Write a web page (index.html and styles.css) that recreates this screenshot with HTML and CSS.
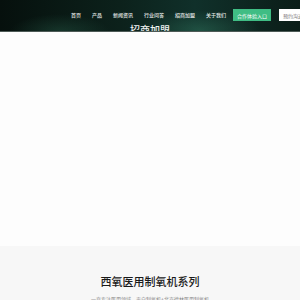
FILE: index.html
```html
<!DOCTYPE html>
<html>

<head>
  <title>西氧医用制氧机</title>
  <link rel="stylesheet" href="styles.css">
</head>

<body>
  <div class="header">
    <div class="nav-row">
      <ul class="nav">
        <li>首页</li>
        <li>产品</li>
        <li>新闻资讯</li>
        <li>行业问答</li>
        <li>招商加盟</li>
        <li>关于我们</li>
      </ul>
      <button class="btn-green">合作体验入口</button>
      <button class="btn-white">预约沟通</button>
    </div>
    <h1 class="banner-title">招商加盟</h1>
  </div>

  <div class="banner"></div>

  <div class="series">
    <h2>西氧医用制氧机系列</h2>
    <p>一直专注医用领域，来自制氧机+北京德林医用制氧机</p>
  </div>
</body>

</html>
```

FILE: styles.css
```css
* {
  margin: 0;
  padding: 0;
  box-sizing: border-box;
  font-family: "Noto Sans CJK SC", "Noto Sans", sans-serif;
}

html,
body {
  width: 300px;
  height: 300px;
  overflow: hidden;
  background-color: #fdfdfd;
}

.header {
  height: 32px;
  overflow: hidden;
  display: flex;
  flex-direction: column;
  align-items: center;
  border-bottom: 1px solid #4d5a56;
  background-color: #0a1613;
  background-image:
    radial-gradient(ellipse 60px 20px at 200px 30px, rgba(60, 140, 110, 0.35), transparent),
    radial-gradient(ellipse 50px 18px at 60px 32px, rgba(60, 140, 110, 0.25), transparent),
    linear-gradient(90deg, #06100d 0%, #0c211b 40%, #10302a 65%, #0b1d18 100%);
}

.nav-row {
  width: 100%;
  display: flex;
  align-items: center;
  padding: 9px 0 0 71px;
  height: 21px;
  flex-shrink: 0;
  white-space: nowrap;
}

.nav {
  list-style: none;
  display: flex;
  gap: 11px;
  flex-shrink: 0;
}

.nav li {
  font-size: 5px;
  font-weight: 500;
  line-height: 12px;
  color: #e4e8e6;
  flex-shrink: 0;
}

.btn-green,
.btn-white {
  border: none;
  font-size: 5px;
  height: 12px;
  padding: 0 4px;
  flex-shrink: 0;
  white-space: nowrap;
}

.btn-green {
  margin-left: 7px;
  width: 38px;
  background-color: #3fbd84;
  color: #ffffff;
}

.btn-white {
  margin-left: 8px;
  width: 30px;
  background-color: #ffffff;
  color: #777777;
  text-align: left;
}

.banner-title {
  font-size: 10px;
  font-weight: 500;
  line-height: 12px;
  margin-top: 3px;
  color: #eef2f0;
  flex-shrink: 0;
}

.banner {
  height: 214px;
  background-color: #fdfdfd;
}

.series {
  background-color: #f7f7f7;
  text-align: center;
  padding-top: 27px;
  height: 60px;
}

.series h2 {
  font-size: 11px;
  font-weight: 500;
  line-height: 17px;
  color: #1a1a1a;
}

.series p {
  margin-top: 5px;
  font-size: 5px;
  line-height: 8px;
  color: #888888;
}
```
